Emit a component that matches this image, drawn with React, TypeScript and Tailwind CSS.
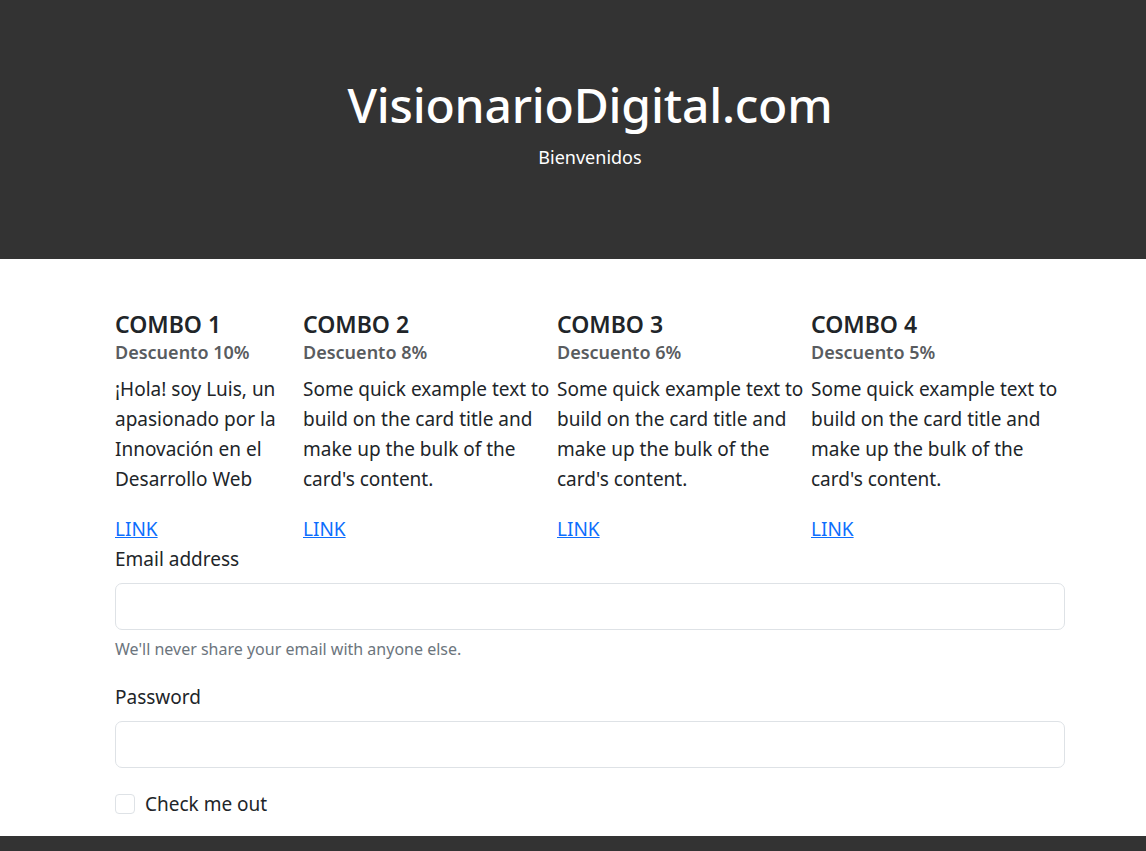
const combos = [
  {
    title: 'COMBO 1',
    discount: 'Descuento 10%',
    text: '¡Hola! soy Luis, un apasionado por la Innovación en el Desarrollo Web',
    width: 'w-[188px]',
  },
  {
    title: 'COMBO 2',
    discount: 'Descuento 8%',
    text: "Some quick example text to build on the card title and make up the bulk of the card's content.",
    width: 'w-[254px]',
  },
  {
    title: 'COMBO 3',
    discount: 'Descuento 6%',
    text: "Some quick example text to build on the card title and make up the bulk of the card's content.",
    width: 'w-[254px]',
  },
  {
    title: 'COMBO 4',
    discount: 'Descuento 5%',
    text: "Some quick example text to build on the card title and make up the bulk of the card's content.",
    width: 'w-[254px]',
  },
];

const App = () => {
  return (
    <div className="min-h-screen bg-white font-['Noto_Sans',sans-serif] text-[#212529]">
      {/* Cabecera */}
      <header className="flex h-[259px] flex-col items-center bg-[#333333] pt-[73px] pl-[34px] text-white">
        <h1 className="text-[48px] leading-[63px] font-medium tracking-[-0.2px]">VisionarioDigital.com</h1>
        <p className="mt-[8px] text-[18px] leading-[26px]">Bienvenidos</p>
      </header>

      <main className="ml-[115px] w-[950px] pt-[51px] pb-[17px]">
        {/* Combos */}
        <div className="flex">
          {combos.map((combo) => (
            <div key={combo.title} className={`${combo.width} shrink-0`}>
              <h5 className="text-[23px] leading-[29px] font-semibold">{combo.title}</h5>
              <h6 className="text-[18px] leading-[26px] font-semibold text-[#595c5f]">{combo.discount}</h6>
              <p className="mt-[9px] pr-1 text-[19px] leading-[30px]">{combo.text}</p>
              <a href="#" className="mt-[20px] block text-[19px] leading-[30px] text-[#0d6efd] underline">
                LINK
              </a>
            </div>
          ))}
        </div>

        {/* Formulario */}
        <form>
          <label className="block text-[19px] leading-[30px]">Email address</label>
          <input
            type="email"
            className="mt-[9px] block h-[47px] w-full rounded-[7px] border border-[#dee2e6] px-3"
          />
          <p className="mt-[7px] text-[16px] leading-[24px] text-[#6c757d]">
            We'll never share your email with anyone else.
          </p>

          <label className="mt-[21px] block text-[19px] leading-[30px]">Password</label>
          <input
            type="password"
            className="mt-[9px] block h-[47px] w-full rounded-[7px] border border-[#dee2e6] px-3"
          />

          <div className="mt-[21px] flex items-center gap-[10px]">
            <span className="h-[20px] w-[20px] rounded-[4px] border border-[#dee2e6]" />
            <span className="text-[19px] leading-[30px]">Check me out</span>
          </div>
        </form>
      </main>

      <footer className="h-[80px] bg-[#333333]" />
    </div>
  );
};

export default App;
